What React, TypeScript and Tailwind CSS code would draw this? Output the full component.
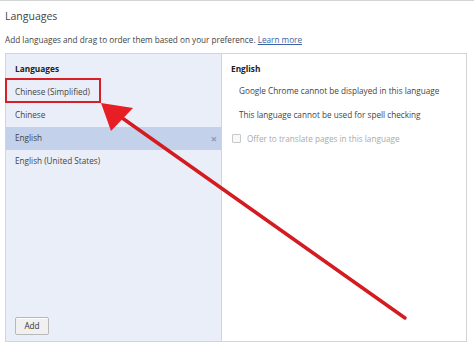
import React from "react";

export default function App() {
  const font = { fontFamily: '"Open Sans", "Noto Sans", sans-serif' };
  return (
    <div className="relative w-[474px] h-[347px] bg-white overflow-hidden text-[#303030]" style={font}>
      <div className="border-t border-[#d4d4d4] h-full px-[5px] pt-[8px] flex flex-col">
        <div className="text-[10.5px] leading-[14px] text-[#444]">Languages</div>
        <div className="mt-[11px] text-[8.2px] leading-[11px] text-[#444]">
          Add languages and drag to order them based on your preference.{" "}
          <span className="text-[#3b63a8] underline">Learn more</span>
        </div>
        <div className="mt-[8px] w-[462px] h-[289px] border border-[#d4d4d4] flex">
          <div className="w-[216px] bg-[#eaeef9] border-r border-[#d4d4d4] flex flex-col">
            <div className="px-[9px] pt-[9px] pb-[7px] text-[8.3px] leading-[11px] font-bold text-[#222]">Languages</div>
            <div className="px-[9px] h-[23px] flex items-center text-[8.2px] text-[#444]">Chinese (Simplified)</div>
            <div className="px-[9px] h-[23px] flex items-center text-[8.2px] text-[#444]">Chinese</div>
            <div className="pl-[9px] pr-[4px] h-[23px] flex items-center justify-between text-[8.2px] text-[#444] bg-[#c3d1ea]">
              <span>English</span>
              <span className="text-[#8a9bb8] text-[11px] font-bold leading-none">×</span>
            </div>
            <div className="px-[9px] h-[23px] flex items-center text-[8.2px] text-[#444]">English (United States)</div>
            <div className="flex-1" />
            <div className="px-[9px] pb-[6px]">
              <div className="w-[34px] h-[18px] border border-[#b8b8b8] bg-[#f0f0f0] rounded-[2px] text-[8.2px] text-[#333] flex items-center justify-center shadow-[inset_0_1px_0_#fff]">
                Add
              </div>
            </div>
          </div>
          <div className="flex-1 flex flex-col">
            <div className="px-[9px] pt-[9px] text-[8.3px] leading-[11px] font-bold text-[#222]">English</div>
            <div className="pl-[17px] mt-[11px] text-[8.2px] leading-[11px] text-[#444]">Google Chrome cannot be displayed in this language</div>
            <div className="pl-[17px] mt-[13px] text-[8.2px] leading-[11px] text-[#444]">This language cannot be used for spell checking</div>
            <div className="pl-[10px] mt-[13px] flex items-center gap-[6px] text-[8.2px] leading-[11px] text-[#aaa]">
              <span className="w-[9px] h-[9px] border border-[#c8c8c8] bg-[#f8f8f8] rounded-[1px]" />
              <span>Offer to translate pages in this language</span>
            </div>
          </div>
        </div>
      </div>
      <div className="absolute left-[5px] top-[78px] w-[96px] h-[25px] border-[2px] border-[#d42026]" />
      <svg className="absolute left-0 top-0" width="474" height="347" viewBox="0 0 474 347">
        <line x1="405" y1="318" x2="118" y2="115" stroke="#d41c20" strokeWidth="3.5" strokeLinecap="round" />
        <polygon points="101,103 133,108 111,131" fill="#e81e25" />
      </svg>
    </div>
  );
}
